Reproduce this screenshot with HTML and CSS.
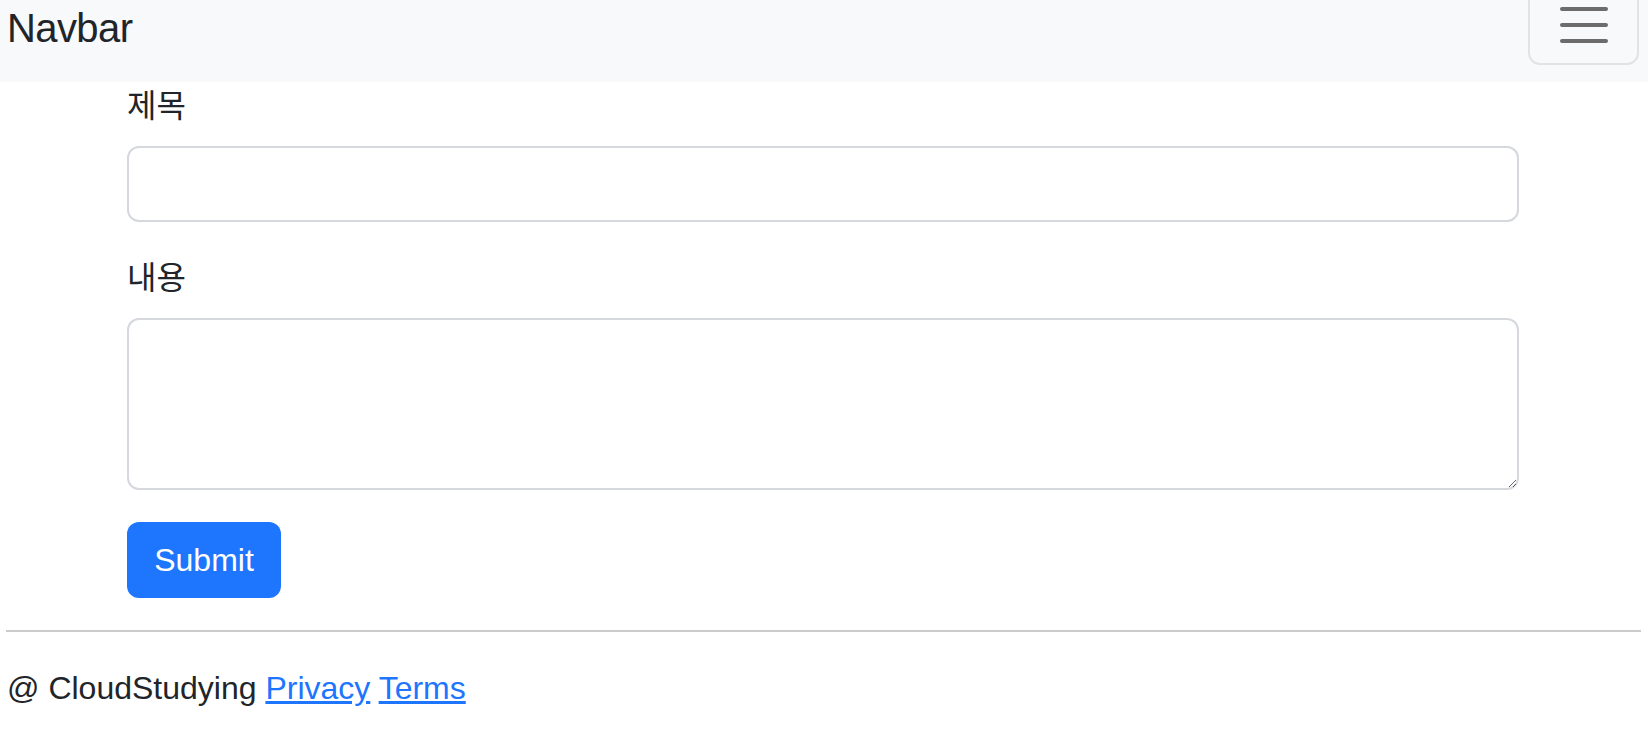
FILE: index.html
```html
<!DOCTYPE html>
<html>
<head>
  <title>글쓰기</title>
  <link rel="stylesheet" href="styles.css">
</head>
<body>
  <nav class="navbar">
    <a class="navbar-brand" href="#">Navbar</a>
    <button class="navbar-toggler" type="button">
      <span class="toggler-line"></span>
      <span class="toggler-line"></span>
      <span class="toggler-line"></span>
    </button>
  </nav>

  <div class="container">
    <form class="post-form">
      <div class="field">
        <label class="form-label" for="title">제목</label>
        <input type="text" class="form-control" id="title">
      </div>
      <div class="field">
        <label class="form-label" for="content">내용</label>
        <textarea class="form-control" id="content" rows="3"></textarea>
      </div>
      <button type="submit" class="btn-primary">Submit</button>
    </form>
  </div>

  <hr class="divider">

  <footer class="footer">
    @ CloudStudying <a href="#">Privacy</a> <a href="#">Terms</a>
  </footer>
</body>
</html>
```

FILE: styles.css
```css
body {
  margin: 0;
  font-family: "Liberation Sans", "Noto Sans CJK KR", sans-serif;
  font-size: 32px;
  line-height: 48px;
  color: #212529;
  background-color: #fff;
}

.navbar {
  display: flex;
  justify-content: space-between;
  align-items: flex-start;
  height: 82px;
  padding: 0 9px 0 7px;
  background-color: #f8f9fa;
}

.navbar-brand {
  margin-top: 4px;
  font-size: 40px;
  line-height: 48px;
  color: #212529;
  text-decoration: none;
  letter-spacing: -0.6px;
}

.navbar-toggler {
  display: flex;
  flex-direction: column;
  justify-content: center;
  align-items: center;
  gap: 12px;
  width: 111px;
  height: 80px;
  margin-top: -15px;
  padding: 0;
  background: transparent;
  border: 2px solid #e2e3e5;
  border-radius: 12px;
}

.toggler-line {
  display: block;
  width: 48px;
  height: 4px;
  border-radius: 2px;
  background-color: #6c6c6c;
}

.container {
  width: 1392px;
  margin: 0 auto;
  padding: 0 25px 0 23px;
}

.field {
  margin-bottom: 32px;
}

.form-label {
  display: block;
  margin-bottom: 16px;
}

.form-control {
  display: block;
  box-sizing: border-box;
  width: 100%;
  padding: 12px 24px;
  font-family: inherit;
  font-size: 32px;
  line-height: 48px;
  color: #212529;
  background-color: #fff;
  border: 2px solid #d5d8dc;
  border-radius: 12px;
}

input.form-control {
  height: 76px;
}

textarea.form-control {
  height: 172px;
  resize: vertical;
}

.btn-primary {
  display: block;
  width: 154px;
  height: 76px;
  padding: 0;
  font-family: inherit;
  font-size: 32px;
  color: #fff;
  background-color: #1e75fe;
  border: none;
  border-radius: 12px;
}

.divider {
  margin: 32px 7px 0 6px;
  border: 0;
  border-top: 2px solid #cbcbcb;
}

.footer {
  padding: 32px 7px 40px;
}

.footer a {
  color: #1e75fe;
}
```
